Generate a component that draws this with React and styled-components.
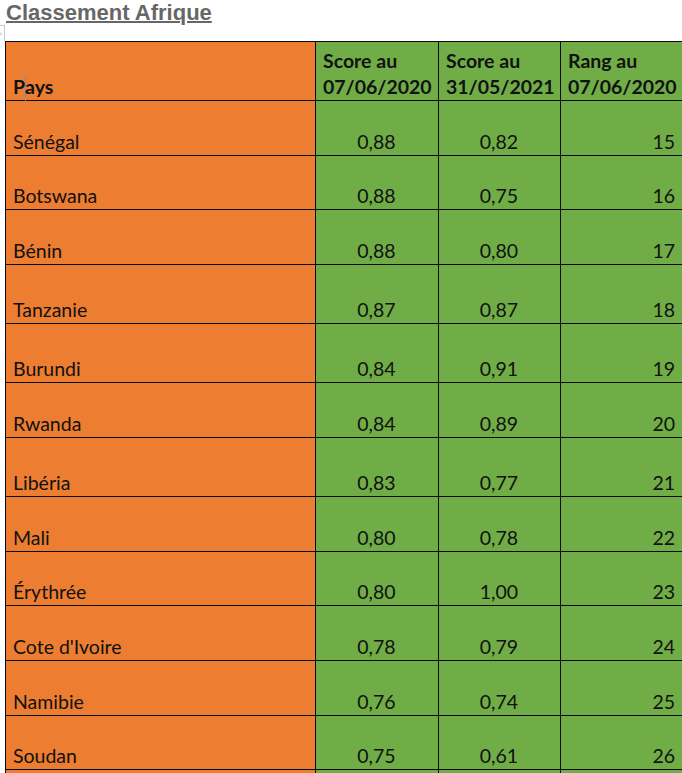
import React from "react"
import styled, { createGlobalStyle } from "styled-components"

const GlobalStyle = createGlobalStyle`
  html, body {
    margin: 0;
    padding: 0;
    background: #ffffff;
    overflow: hidden;
  }
`

const Page = styled.div`
  width: 690px;
  font-family: Lato, "Open Sans", sans-serif;
  color: #111;
`

const Title = styled.h1`
  margin: 0 0 0 6px;
  height: 25px;
  font-family: "Liberation Sans", Arial, sans-serif;
  font-size: 22px;
  line-height: 25px;
  font-weight: bold;
  color: #676767;
  text-decoration: underline;
  text-decoration-thickness: 2px;
  text-underline-offset: 1px;
`

const Marker = styled.div`
  height: 16px;
  display: flex;
`

const MarkerBox = styled.div`
  width: 4px;
  border-top: 1px solid #c8c8c8;
  border-right: 1px solid #c8c8c8;
  display: flex;
  align-items: center;
  font-size: 7px;
  line-height: 1;
  color: #777;
`

const Sheet = styled.div`
  margin-left: 5px;
  display: flex;
  flex-direction: column;
  gap: 1px;
  padding: 1px;
  background: #0a0a0a;
  width: max-content;
`

const Row = styled.div`
  display: grid;
  grid-template-columns: 309px 122px 121px 122px;
  gap: 1px;
  height: ${p => p.$h}px;
`

const Cell = styled.div`
  display: flex;
  align-items: flex-end;
  justify-content: ${p =>
    p.$align === "right" ? "flex-end" : p.$align === "center" ? "center" : "flex-start"};
  padding: ${p => (p.$head ? "0 6px 0 7px" : "0 8px 1px 7px")};
  background: ${p => (p.$orange ? "#ed7d31" : "#70ad47")};
  font-size: 19.5px;
  line-height: ${p => (p.$head ? "26px" : "24px")};
  font-weight: ${p => (p.$head ? 700 : 400)};
  white-space: pre-line;
`

const Caret = styled.span`
  display: inline-block;
  width: 1px;
  height: 28px;
  margin: 0 -1px -4px 0;
  background: #7d8da3;
  vertical-align: bottom;
`

const rows = [
  ["Sénégal", "0,88", "0,82", "15", 54],
  ["Botswana", "0,88", "0,75", "16", 53],
  ["Bénin", "0,88", "0,80", "17", 54],
  ["Tanzanie", "0,87", "0,87", "18", 58],
  ["Burundi", "0,84", "0,91", "19", 58],
  ["Rwanda", "0,84", "0,89", "20", 54],
  ["Libéria", "0,83", "0,77", "21", 58],
  ["Mali", "0,80", "0,78", "22", 54],
  ["Érythrée", "0,80", "1,00", "23", 53],
  ["Cote d'Ivoire", "0,78", "0,79", "24", 54],
  ["Namibie", "0,76", "0,74", "25", 54],
  ["Soudan", "0,75", "0,61", "26", 53],
  ["", "", "", "", 54],
]

export default function App() {
  return (
    <Page>
      <GlobalStyle />
      <Title>Classement Afrique</Title>
      <Marker>
        <MarkerBox>›</MarkerBox>
      </Marker>
      <Sheet>
        <Row $h={58}>
          <Cell $orange $head>
            <span>
              P<Caret />ays
            </span>
          </Cell>
          <Cell $head>{"Score au\n07/06/2020"}</Cell>
          <Cell $head>{"Score au\n31/05/2021"}</Cell>
          <Cell $head>{"Rang au\n07/06/2020"}</Cell>
        </Row>
        {rows.map(([pays, s1, s2, rang, h], i) => (
          <Row $h={h} key={i}>
            <Cell $orange>{pays}</Cell>
            <Cell $align="center">{s1}</Cell>
            <Cell $align="center">{s2}</Cell>
            <Cell $align="right">{rang}</Cell>
          </Row>
        ))}
      </Sheet>
    </Page>
  )
}
